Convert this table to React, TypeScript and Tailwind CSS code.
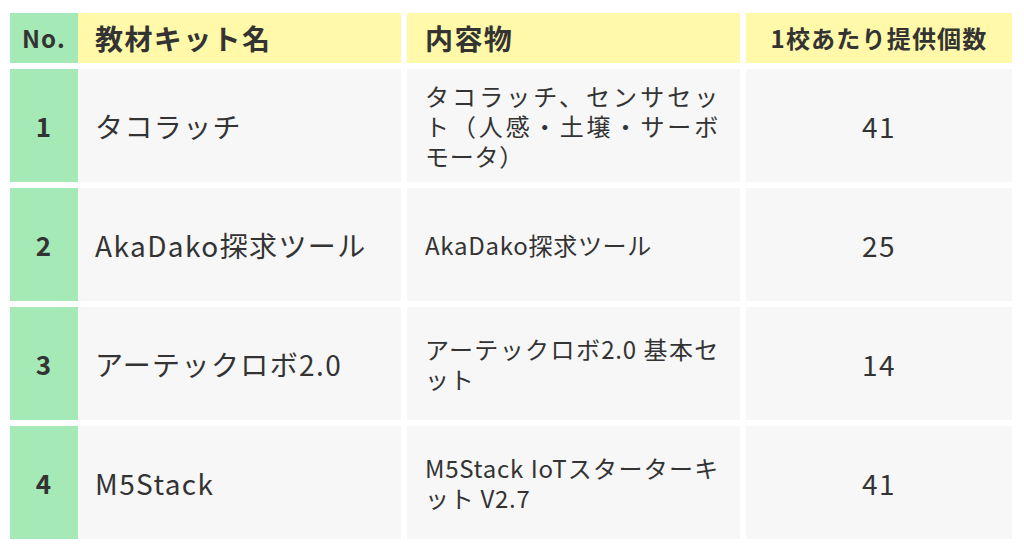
import React from 'react';

interface KitRow {
  no: number;
  name: string;
  contents: string;
  count: number;
}

const rows: KitRow[] = [
  { no: 1, name: 'タコラッチ', contents: 'タコラッチ、センサセット（人感・土壌・サーボモータ）', count: 41 },
  { no: 2, name: 'AkaDako探求ツール', contents: 'AkaDako探求ツール', count: 25 },
  { no: 3, name: 'アーテックロボ2.0', contents: 'アーテックロボ2.0 基本セット', count: 14 },
  { no: 4, name: 'M5Stack', contents: 'M5Stack IoTスターターキット V2.7', count: 41 },
];

export default function App() {
  return (
    <div
      className="w-[1024px] h-[552px] bg-white pl-[10px] pt-[13px] text-[#333333]"
      style={{ fontFamily: '"Noto Sans CJK JP", "Noto Sans", sans-serif' }}
    >
      <div className="flex flex-col gap-[6px] w-[1002px]">
        {/* Header */}
        <div className="flex gap-[6px] h-[50px]">
          <div className="flex">
            <div className="w-[68px] bg-[#a5e9b6] flex items-center justify-center text-[24px] font-bold tracking-wider">
              No.
            </div>
            <div className="w-[323px] bg-[#fff9a9] flex items-center pl-[17px] text-[28px] font-bold tracking-wider">
              教材キット名
            </div>
          </div>
          <div className="w-[333px] bg-[#fff9a9] flex items-center pl-[18px] text-[28px] font-bold tracking-wider">
            内容物
          </div>
          <div className="w-[266px] bg-[#fff9a9] flex items-center justify-center text-[24px] font-bold tracking-wider">
            1校あたり提供個数
          </div>
        </div>

        {/* Body */}
        {rows.map((row) => (
          <div key={row.no} className="flex gap-[6px] h-[113px]">
            <div className="flex">
              <div className="w-[68px] bg-[#a5e9b6] flex items-center justify-center text-[26px] font-bold tracking-wider">
                {row.no}
              </div>
              <div className="w-[323px] bg-[#f7f7f7] flex items-center pl-[17px] text-[28px] tracking-wider">
                {row.name}
              </div>
            </div>
            <div className="w-[333px] bg-[#f7f7f7] flex items-center pl-[18px] pr-[21px]">
              <p className="text-[24px] leading-[30px] tracking-[0.03em] text-justify w-full">{row.contents}</p>
            </div>
            <div className="w-[266px] bg-[#f7f7f7] flex items-center justify-center text-[28px] tracking-wider">
              {row.count}
            </div>
          </div>
        ))}
      </div>
    </div>
  );
}
